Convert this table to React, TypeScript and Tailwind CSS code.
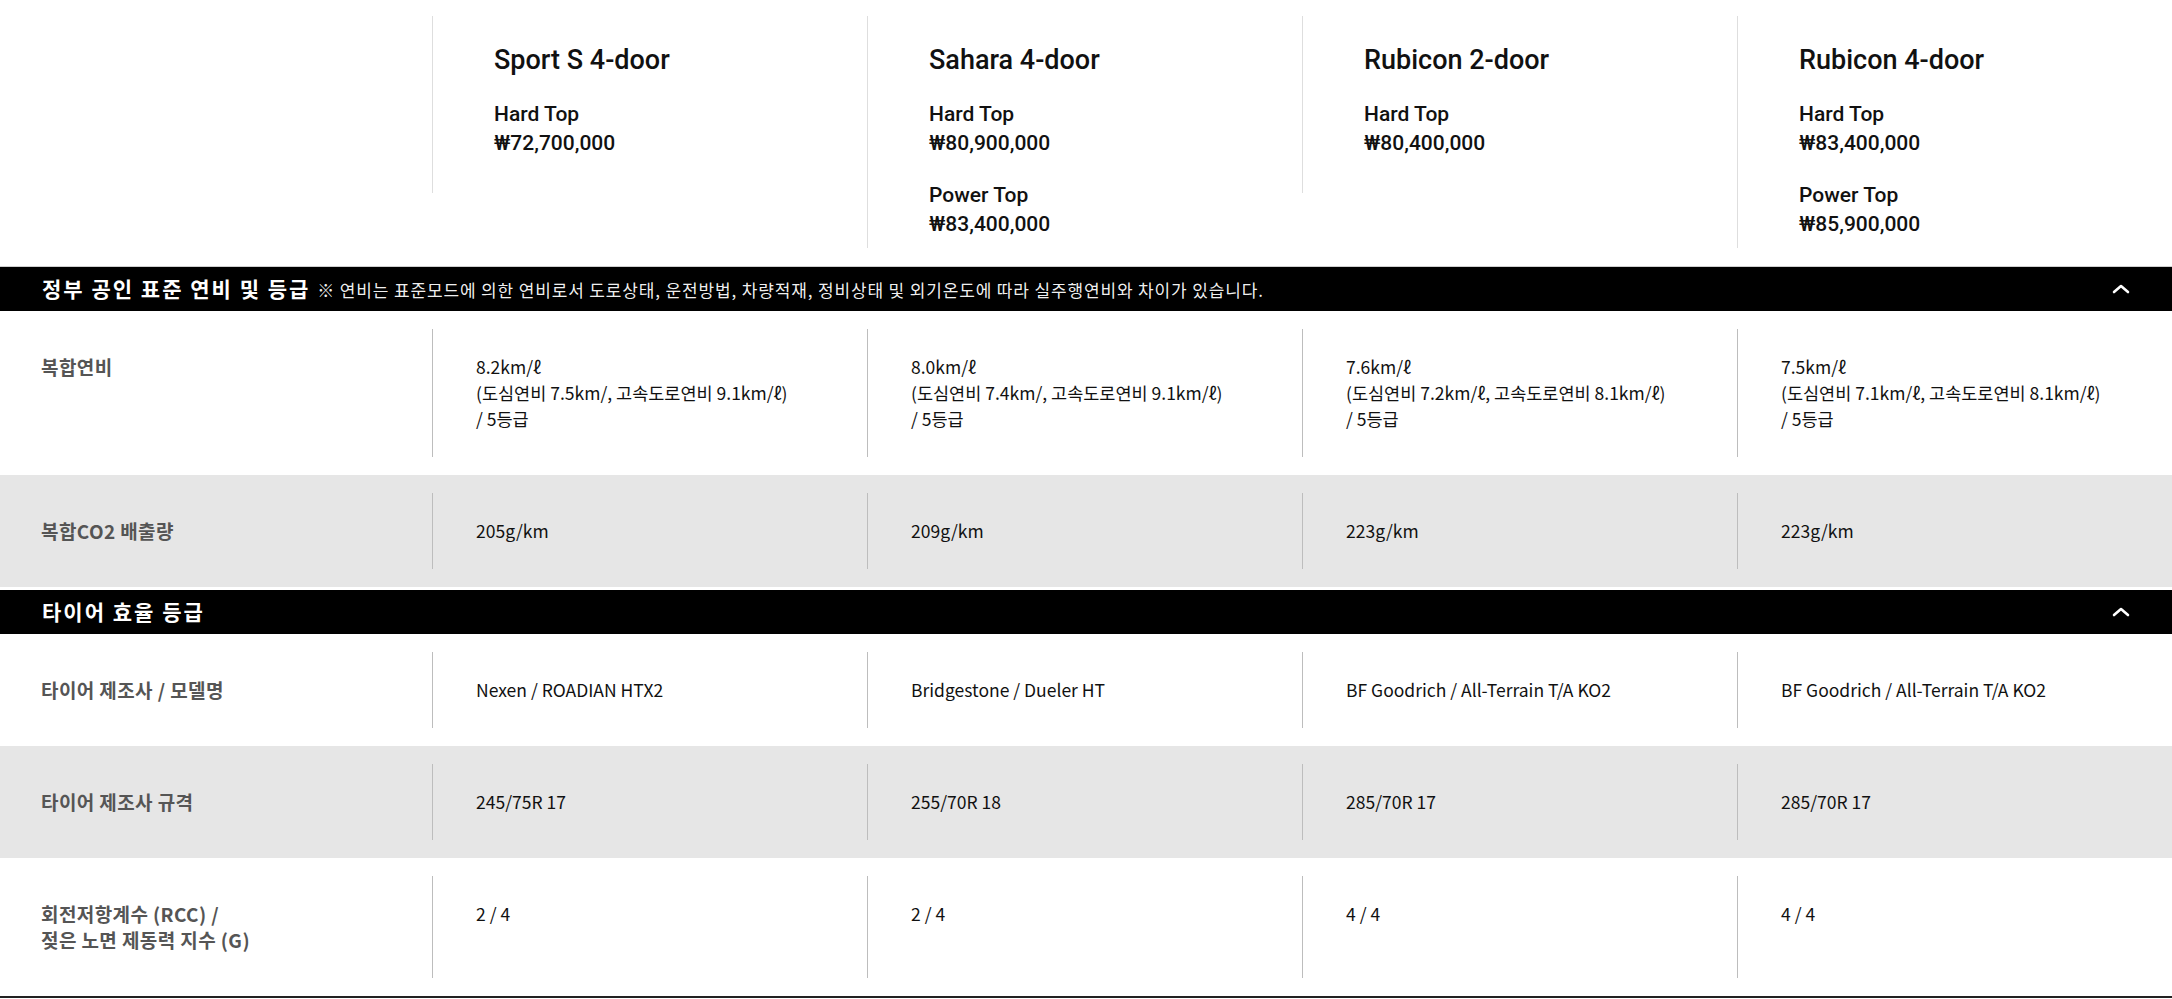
import React from "react";

interface Trim {
  name: string;
  price: string;
}

interface Model {
  title: string;
  trims: Trim[];
  fuel: string[];
  co2: string;
  tire: string;
  size: string;
  rcc: string;
}

const models: Model[] = [
  {
    title: "Sport S 4-door",
    trims: [{ name: "Hard Top", price: "₩72,700,000" }],
    fuel: ["8.2km/ℓ", "(도심연비 7.5km/, 고속도로연비 9.1km/ℓ)", "/ 5등급"],
    co2: "205g/km",
    tire: "Nexen / ROADIAN HTX2",
    size: "245/75R 17",
    rcc: "2 / 4",
  },
  {
    title: "Sahara 4-door",
    trims: [
      { name: "Hard Top", price: "₩80,900,000" },
      { name: "Power Top", price: "₩83,400,000" },
    ],
    fuel: ["8.0km/ℓ", "(도심연비 7.4km/, 고속도로연비 9.1km/ℓ)", "/ 5등급"],
    co2: "209g/km",
    tire: "Bridgestone / Dueler HT",
    size: "255/70R 18",
    rcc: "2 / 4",
  },
  {
    title: "Rubicon 2-door",
    trims: [{ name: "Hard Top", price: "₩80,400,000" }],
    fuel: ["7.6km/ℓ", "(도심연비 7.2km/ℓ, 고속도로연비 8.1km/ℓ)", "/ 5등급"],
    co2: "223g/km",
    tire: "BF Goodrich / All-Terrain T/A KO2",
    size: "285/70R 17",
    rcc: "4 / 4",
  },
  {
    title: "Rubicon 4-door",
    trims: [
      { name: "Hard Top", price: "₩83,400,000" },
      { name: "Power Top", price: "₩85,900,000" },
    ],
    fuel: ["7.5km/ℓ", "(도심연비 7.1km/ℓ, 고속도로연비 8.1km/ℓ)", "/ 5등급"],
    co2: "223g/km",
    tire: "BF Goodrich / All-Terrain T/A KO2",
    size: "285/70R 17",
    rcc: "4 / 4",
  },
];

const kr = "font-['Noto_Sans_CJK_KR',sans-serif]";

const Chevron = () => (
  <svg width="18" height="10" viewBox="0 0 18 10" fill="none">
    <polyline points="2,8 9,2 16,8" stroke="white" strokeWidth="2.6" strokeLinecap="round" strokeLinejoin="round" />
  </svg>
);

const SectionBar = ({ title, note }: { title: string; note?: string }) => (
  <div className="flex items-center justify-between bg-black h-[44px] px-[42px] text-white">
    <div className="flex items-baseline gap-[7px]">
      <span className="text-[21px] font-bold tracking-[2px]">{title}</span>
      {note && <span className="text-[17px] tracking-[0.85px] text-white/95">{note}</span>}
    </div>
    <Chevron />
  </div>
);

const SpecRow = ({
  label,
  values,
  gray,
}: {
  label: string[];
  values: string[][];
  gray?: boolean;
}) => (
  <div className={`grid grid-cols-[432px_repeat(4,1fr)] py-[18px] ${gray ? "bg-[#e6e6e6]" : "bg-white"}`}>
    <div className="pl-[41px] py-[25px] leading-[26px] text-[19px] font-bold text-[#555] tracking-[0.4px]">
      {label.map((l) => (
        <div key={l}>{l}</div>
      ))}
    </div>
    {values.map((v, i) => (
      <div key={i} className="border-l border-[#bdbdbd] pl-[43px] py-[25px] leading-[26px] text-[17.5px] text-[#111]">
        {v.map((line) => (
          <div key={line}>{line}</div>
        ))}
      </div>
    ))}
  </div>
);

export default function App() {
  return (
    <div className={`w-[2172px] bg-white ${kr}`}>
      {/* model header */}
      <div className="grid grid-cols-[432px_repeat(4,1fr)] h-[267px] pt-[16px] border-b border-[#cfcfcf] items-start">
        <div />
        {models.map((m) => (
          <div
            key={m.title}
            className={`border-l border-[#dedede] pl-[61px] pt-[27px] font-['Roboto',sans-serif] text-[#111] ${m.trims.length > 1 ? "h-[232px]" : "h-[177px]"}`}
          >
            <h2 className="text-[27px] leading-[34px] font-medium">{m.title}</h2>
            {m.trims.map((t) => (
              <div key={t.name} className="mt-[23px] text-[21px] leading-[29px] font-medium">
                <div>{t.name}</div>
                <div>{t.price}</div>
              </div>
            ))}
          </div>
        ))}
      </div>

      <SectionBar
        title="정부 공인 표준 연비 및 등급"
        note="※ 연비는 표준모드에 의한 연비로서 도로상태, 운전방법, 차량적재, 정비상태 및 외기온도에 따라 실주행연비와 차이가 있습니다."
      />
      <SpecRow label={["복합연비"]} values={models.map((m) => m.fuel)} />
      <SpecRow label={["복합CO2 배출량"]} values={models.map((m) => [m.co2])} gray />

      <div className="mt-[3px]">
        <SectionBar title="타이어 효율 등급" />
      </div>
      <SpecRow label={["타이어 제조사 / 모델명"]} values={models.map((m) => [m.tire])} />
      <SpecRow label={["타이어 제조사 규격"]} values={models.map((m) => [m.size])} gray />
      <div className="border-b-2 border-[#222]">
        <SpecRow label={["회전저항계수 (RCC) /", "젖은 노면 제동력 지수 (G)"]} values={models.map((m) => [m.rcc])} />
      </div>
    </div>
  );
}
